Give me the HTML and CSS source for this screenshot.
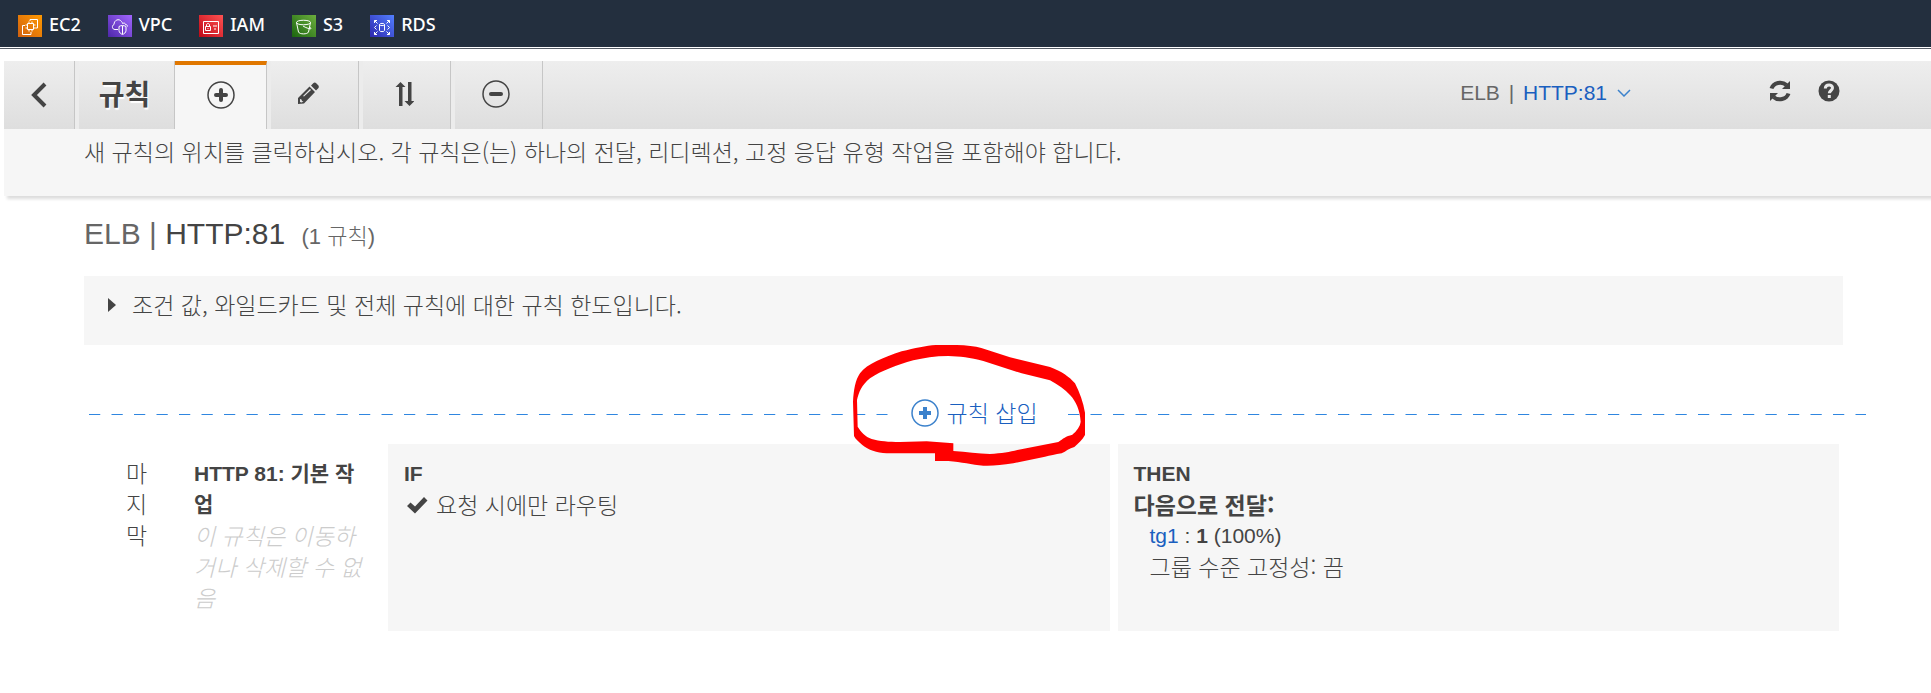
FILE: index.html
```html
<!DOCTYPE html>
<html lang="ko">
<head>
<meta charset="utf-8">
<title>규칙 - ELB</title>
<link rel="stylesheet" href="styles.css">
</head>
<body>
<nav class="services">
  <a class="service" href="#ec2">
    <svg class="service-icon ec2" viewBox="0 0 24 22" aria-hidden="true"><path d="M9.500 8.500h6v6h-6zM11 6.500v2M14 6.500v2M11 14.500v2M14 14.500v2M7.500 10h2M7.500 13h2M15.500 10h2M15.500 13h2M12 6V4.500h7.500v8.500h-2M7 10.500H4.500v9h8.500V17"/></svg>EC2</a>
  <a class="service" href="#vpc">
    <svg class="service-icon vpc" viewBox="0 0 24 22" aria-hidden="true"><path d="M10 14.500H7c-3 0-3.500-4-1-5C6 5 11 3 13.500 6.500c1 1 1 2 1 2 2-1 3 0 3 1 1.500 0 2 1 2 2M14.500 10.500c1.500 0 2.500.5 3.500 1v4c0 2-2 3.500-3.500 4-1.500-.5-3.500-2-3.500-4v-4c1-.5 2-1 3.500-1zM14.500 11v8"/></svg>VPC</a>
  <a class="service" href="#iam">
    <svg class="service-icon iam" viewBox="0 0 24 22" aria-hidden="true"><path d="M4.500 6.500h15v12h-15zM6.500 11.500h5v4h-5zM7.500 11.500v-1.500c0-2 3-2 3 0v1.500M9 13v1M14 11h4M15 14h2"/></svg>IAM</a>
  <a class="service" href="#s3">
    <svg class="service-icon s3" viewBox="0 0 24 22" aria-hidden="true"><path d="M4.500 7.500c0-3 14-3 14 0s-14 3-14 0l2 9.500c1 2.500 9 2.500 10 0l2-9.500M11 11c3 2 8 3.500 8 2.500s-1-1-2-1.500"/></svg>S3</a>
  <a class="service" href="#rds">
    <svg class="service-icon rds" viewBox="0 0 24 22" aria-hidden="true"><path d="M9.500 9.500c0-1.500 5-1.500 5 0v6c0 1.500-5 1.500-5 0zM9.500 9.500c0 1.500 5 1.500 5 0M4.500 8V5.500H7M4.500 5.500l3 3M19.500 8V5.500H17M19.500 5.500l-3 3M4.500 17v2.500H7M4.500 19.500l3-3M19.500 17v2.500H17M19.500 19.500l-3-3M6.500 10.500L4.500 12.500l2 2M17.500 10.500l2 2-2 2"/></svg>RDS</a>
</nav>

<header class="editor">
  <div class="toolbar">
    <button class="tool back" aria-label="뒤로"><svg width="16" height="26" viewBox="0 0 16 26"><path class="line-3" d="M14 2L3 13l11 11"/></svg></button>
    <h1 class="tool title">규칙</h1>
    <button class="tool active" aria-label="규칙 추가"><svg width="28" height="28" viewBox="0 0 28 28"><circle class="ring" cx="14" cy="14" r="13"/><path class="line-4" d="M14 9v10M9 14h10"/></svg></button>
    <button class="tool" aria-label="규칙 편집"><svg width="28" height="28" viewBox="1 0 28 28"><path class="solid" fill-rule="evenodd" d="M1 24v-6L12.500 6.500l5.500 5.500L7 23.500zM3 19v3l1.500.5 2-1-1.500-.5-.5-1.500zM13 9L6 16l1 .5 7-6.500zM14 5.500L16.500 3c1-1 2-.5 3 .5l1.500 1.500c1 1 1 2 .5 3L19 10.500z"/></svg></button>
    <button class="tool" aria-label="규칙 재정렬"><svg width="20" height="26" viewBox="-2 0 20 26"><path class="solid" d="M4.500 1l5 5H6.500v19H3V6H-.5zM13.500 25l-5-5H12V1h3.500v19H18.500z"/></svg></button>
    <button class="tool" aria-label="규칙 삭제"><svg width="28" height="28" viewBox="0 0 28 28"><circle class="ring" cx="14" cy="14" r="13"/><path class="line-4" d="M9 14h10"/></svg></button>
    <div class="listener">ELB <span class="bar">|</span> <button class="listener-pick">HTTP:81<svg width="14" height="8" viewBox="0 0 14 8" aria-hidden="true"><path d="M1 1l6 6 6-6"/></svg></button></div>
    <div class="actions">
      <button class="action" aria-label="새로 고침"><svg width="22" height="22" viewBox="0 0 22 22"><path class="arc" d="M2.500 8.500A9 8 0 0 1 17.500 5M19.500 13.500A9 8 0 0 1 4.500 17"/><path class="solid" d="M21 1v8h-8zM1 21v-8h8z"/></svg></button>
      <button class="action" aria-label="도움말"><svg width="22" height="22" viewBox="0 0 22 22"><circle class="solid" cx="11" cy="11" r="10.500"/><path class="mark" d="M7.300 8.500C7.500 4 14.700 4 14.500 8c0 2.500-3.200 2.500-3.200 5.300"/><path class="mark" d="M11.300 15v3"/></svg></button>
    </div>
  </div>
  <p class="hint">새 규칙의 위치를 클릭하십시오. 각 규칙은(는) 하나의 전달, 리디렉션, 고정 응답 유형 작업을 포함해야 합니다.</p>
</header>

<main class="content">
  <h2 class="heading"><span class="balancer">ELB |</span> HTTP:81 <small class="count">(1 규칙)</small></h2>

  <details class="limits">
    <summary><svg width="8" height="14" viewBox="0 0 8 14" aria-hidden="true"><path class="solid" d="M0 0l8 7-8 7z"/></svg>조건 값, 와일드카드 및 전체 규칙에 대한 규칙 한도입니다.</summary>
  </details>

  <div class="insert-row">
    <svg class="dashes" aria-hidden="true"><line x1="0" y1="0.500" x2="100%" y2="0.500"/></svg>
    <div class="insert-slot">
      <button class="insert"><svg width="28" height="28" viewBox="0 0 28 28" aria-hidden="true"><circle cx="14" cy="14" r="13"/><path d="M14 8v12M8 14h12"/></svg>규칙 삽입</button>
      <svg class="marker" width="300" height="150" viewBox="0 0 900 450" aria-hidden="true"><path fill-rule="evenodd" d="M99 215C101 180 106 150 120 130C142 101 190 83 245 64C285 54 318 47 347 45H410C440 46 465 49 484 54L570 82L690 111C725 124 748 140 765 160C779 187 790 218 795 248V315C787 330 775 340 763 351C748 354 738 364 725 370C706 373 690 377 675 380L580 400C545 405 520 408 490 407C455 404 425 396 385 393H345V370H200C170 368 145 360 127 345C115 335 106 327 102 318ZM111 210L113 290C122 305 136 320 155 327C180 334 205 336 240 336L320 334L400 340V363C440 365 475 372 510 372C545 370 570 366 592 360L715 336C730 325 737 319 757 314C770 303 780 290 782 275C780 242 769 215 750 195C735 178 715 165 690 151L605 130L490 93C450 83 420 79 385 78C345 78 310 84 280 91C230 105 185 122 150 145C125 165 116 188 111 210Z"/></svg>
    </div>
    <svg class="dashes" aria-hidden="true"><line x1="0" y1="0.500" x2="100%" y2="0.500"/></svg>
  </div>

  <section class="rule">
    <div class="order">마지막</div>
    <div class="name"><strong class="label">HTTP 81: 기본 작업</strong><em class="note">이 규칙은 이동하거나 삭제할 수 없음</em></div>
    <div class="cards">
      <div class="card">
        <h3 class="label">IF</h3>
        <p class="condition"><svg width="22" height="18" viewBox="0 0 22 18" aria-hidden="true"><path class="solid" d="M1 10l3.500-3.500L9 10.500 18 1l3.500 3.500L9 17.500z"/></svg>요청 시에만 라우팅</p>
      </div>
      <div class="card">
        <h3 class="label">THEN</h3>
        <p class="forward">다음으로 전달:</p>
        <p class="target"><a href="#tg1">tg1</a> : <b>1</b> (100%)</p>
        <p class="sticky">그룹 수준 고정성: 끔</p>
      </div>
    </div>
  </section>
</main>
</body>
</html>
```
FILE: styles.css
```css
* { box-sizing: border-box; }

body {
  margin: 0;
  background: #fff;
  color: #444;
  font: 300 23px/31px "Noto Sans CJK KR", sans-serif;
}

h1, h2, h3, p { margin: 0; }

button {
  padding: 0;
  border: 0;
  background: none;
  color: inherit;
  font: inherit;
  cursor: pointer;
}

a { color: #1a5fbf; text-decoration: none; }

svg { flex: none; fill: none; }

.solid { fill: #444; }
.ring { stroke: #444; stroke-width: 1.500; }
.line-3 { stroke: #444; stroke-width: 4; }
.line-4 { stroke: #444; stroke-width: 4; stroke-linecap: round; }

/* Service shortcuts */
.services {
  display: flex;
  gap: 27px;
  height: 47px;
  padding: 15px 18px 0;
  background: #232f3e;
  box-shadow: 0 1px #fff, 0 2px #545b64;
}

.service {
  display: flex;
  gap: 7px;
  height: 22px;
  color: #fff;
  font: 500 18px/18px "Noto Sans", sans-serif;
}

.service-icon { width: 24px; height: 22px; stroke: #fff; }
.ec2 { background: linear-gradient(45deg, #d0600f, #ff9900); }
.vpc { background: linear-gradient(45deg, #4d27a8, #a166ff); }
.iam { background: linear-gradient(45deg, #bd0816, #ff5252); }
.s3 { background: linear-gradient(45deg, #1b660f, #6cae3e); }
.rds { background: linear-gradient(45deg, #2e27ad, #527fff); }

/* Editor toolbar */
.editor {
  margin: 14px 0 0 4px;
  background: #f6f6f6;
  box-shadow: 3px 3px 3px #ddd;
}

.toolbar {
  display: flex;
  height: 68px;
  background: linear-gradient(#eee, #dedede);
}

.tool {
  display: flex;
  align-items: center;
  justify-content: center;
  width: 92px;
  padding: 0 6px 2px 0;
  border-left: 4px solid #ececec;
  border-right: 1px solid #c6c6c6;
}

.back { width: 71px; padding: 0; border-left: 0; }

.title {
  width: 100px;
  padding: 0 4px 0 0;
  font-family: "Liberation Sans", "Noto Sans CJK KR", sans-serif;
  font-size: 28px;
  font-weight: 700;
  text-shadow: 1px 2px 1px #fff;
}

.active {
  padding: 0 0 4px;
  border-left: 0;
  border-top: 4px solid #e07700;
  background: #f6f6f6;
}

.listener {
  margin-left: auto;
  padding-top: 16px;
  color: #666;
  font: 400 21px/31px "Liberation Sans", sans-serif;
}

.bar { margin: 0 3px; }

.listener-pick { color: #1a5fbf; }
.listener-pick svg { margin: 0 0 3px 10px; stroke: #3c82cc; stroke-width: 1.500; }

.actions {
  display: flex;
  align-items: flex-start;
  gap: 27px;
  margin: 19px 91px 0 138px;
}

.action { display: flex; }
.arc { stroke: #444; stroke-width: 4; }
.mark { stroke: #e8e8e8; stroke-width: 3; }

.hint { padding: 7px 80px 29px; }

/* Rules */
.content { margin: 0 88px 0 84px; }

.heading {
  padding: 20px 0 25px;
  font: 400 30px/35px "Liberation Sans", "Noto Sans CJK KR", sans-serif;
}

.balancer { color: #666; }

.count {
  margin-left: 8px;
  color: #666;
  font-size: 22px;
  font-weight: 300;
  line-height: 22px;
}

.limits { background: #f6f6f6; }

.limits summary {
  display: flex;
  align-items: center;
  gap: 16px;
  padding: 13px 24px 25px;
  list-style: none;
  cursor: pointer;
}

.insert-row {
  display: flex;
  align-items: center;
  margin: 52px -23px 12px 5px;
}

.dashes { flex: 1; width: 0; height: 1px; }

.dashes line {
  stroke: #2f86e0;
  stroke-dasharray: 11.25;
}

.insert-slot {
  position: relative;
  width: 180px;
  padding: 0 0 4px 23px;
}

.insert {
  display: flex;
  align-items: center;
  gap: 8px;
  color: #1a5fbf;
}

.insert circle { stroke: #3c82cc; stroke-width: 1.500; }
.insert path { stroke: #3c82cc; stroke-width: 4; }

.marker {
  position: absolute;
  top: -67px;
  left: -68px;
  pointer-events: none;
}

.marker path { fill: #f00; }

.rule {
  display: grid;
  grid-template-columns: 24px 238px 1fr;
  padding: 0 4px 0 42px;
}

.order { padding-top: 13px; }
.name { padding: 14px 26px 18px 44px; }

.label {
  display: block;
  font: 700 21px/31px "Liberation Sans", "Noto Sans CJK KR", sans-serif;
}

.note { color: #ccc; }

.cards {
  display: grid;
  grid-template-columns: 1fr 1fr;
  gap: 8px;
}

.card {
  padding: 14px 16px 18px;
  background: #f6f6f6;
}

.condition {
  display: flex;
  align-items: center;
  gap: 8px;
  padding-left: 2px;
}

.forward { font-weight: 700; }

.target {
  padding: 0 0 0 16px;
  font: 400 21px/31px "Liberation Sans", sans-serif;
}

.sticky { padding-left: 16px; }
```
